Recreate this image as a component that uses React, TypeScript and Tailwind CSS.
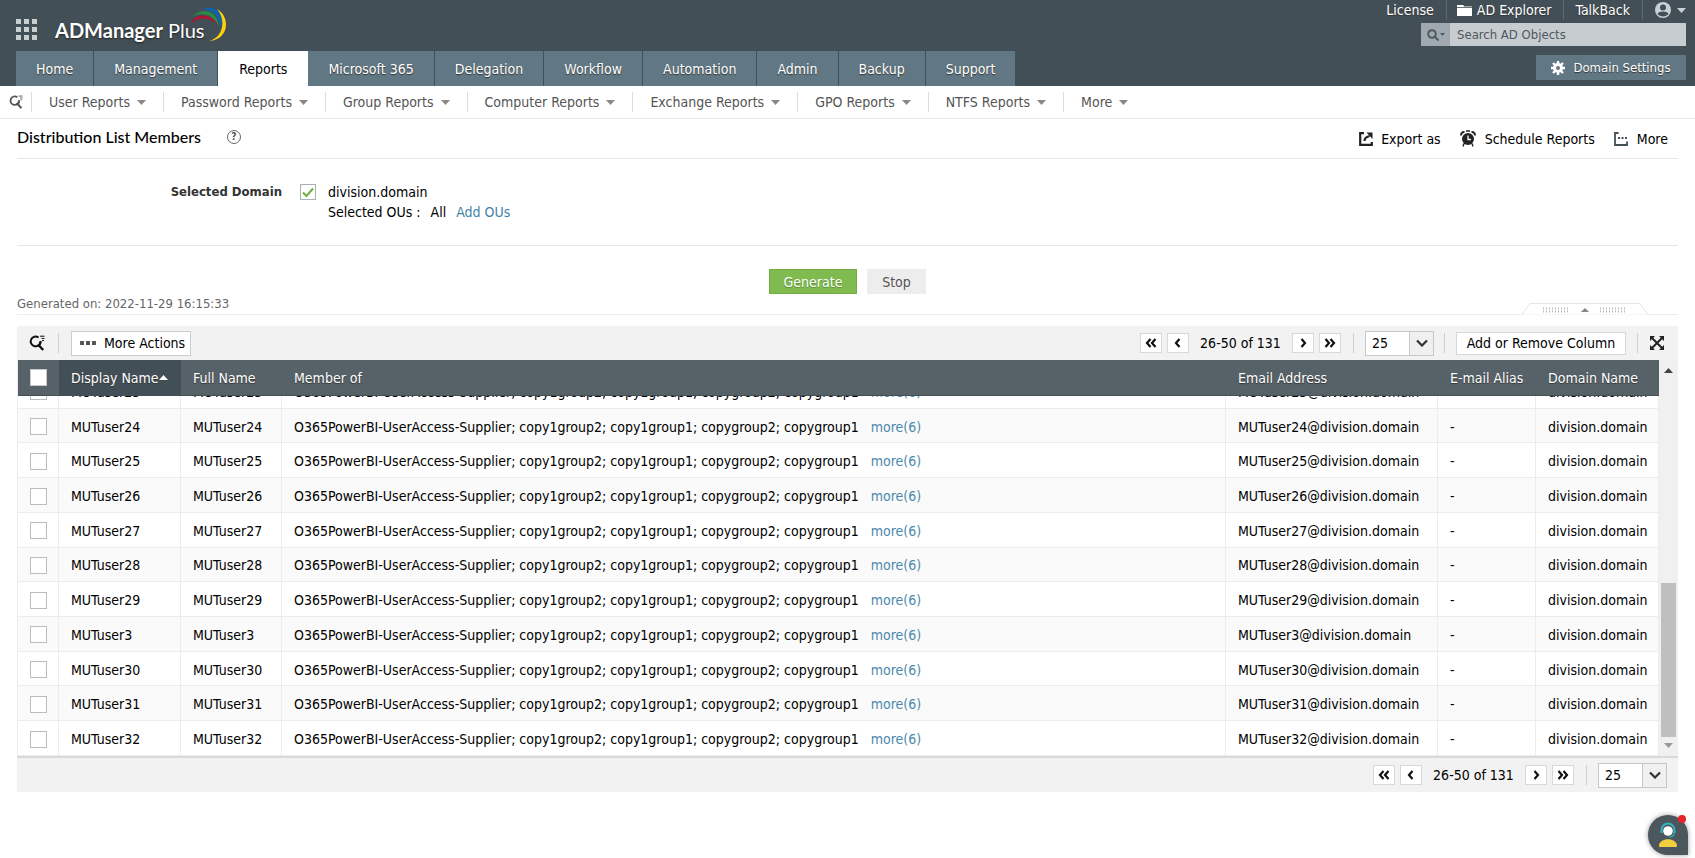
import { useLayoutEffect, useRef } from "react";

const tabs = [
  "Home",
  "Management",
  "Reports",
  "Microsoft 365",
  "Delegation",
  "Workflow",
  "Automation",
  "Admin",
  "Backup",
  "Support",
];

const reportMenus = [
  "User Reports",
  "Password Reports",
  "Group Reports",
  "Computer Reports",
  "Exchange Reports",
  "GPO Reports",
  "NTFS Reports",
  "More",
];

const users = [
  "MUTuser23",
  "MUTuser24",
  "MUTuser25",
  "MUTuser26",
  "MUTuser27",
  "MUTuser28",
  "MUTuser29",
  "MUTuser3",
  "MUTuser30",
  "MUTuser31",
  "MUTuser32",
];

const groups = "O365PowerBI-UserAccess-Supplier; copy1group2; copy1group1; copygroup2; copygroup1";

function Caret({ className }: { className: string }) {
  return (
    <svg viewBox="0 0 9 5" className={className} fill="currentColor" aria-hidden="true">
      <path d="M0 0h9L4.500 5z" />
    </svg>
  );
}

function SearchListIcon({ className }: { className: string }) {
  return (
    <svg viewBox="0 0 16 16" className={className} fill="none" stroke="currentColor" aria-hidden="true">
      <path d="M9.500 2.500A4.900 4.900 0 1 0 11.500 6.500" strokeWidth="2" />
      <path d="M11.500 6A4.900 4.900 0 0 1 8.500 11" strokeWidth="2" />
      <path d="M9.300 9.800l4.900 5.200" strokeWidth="2.400" />
      <path d="M11 1.200H15.500M12.500 3.400H15.500M13 5.600H15" strokeWidth="1" />
    </svg>
  );
}

function AppGridIcon() {
  return (
    <svg viewBox="0 0 21 21" className="size-[21px]" fill="#c9ced1" aria-hidden="true">
      {[0, 8, 16].map((y) => [0, 8, 16].map((x) => <rect key={`${x}-${y}`} x={x} y={y} width="5" height="5" />))}
    </svg>
  );
}

function LogoArcs() {
  return (
    <svg viewBox="0 0 38 36" className="absolute -top-3 -right-6 h-9 w-[38px]" aria-hidden="true">
      <path d="M1 18C4 8 19 5 28 19C20 11 8 10 1 18z" fill="#b3122f" />
      <path d="M3 10C12 1 27 4 29 20C22 8 14 6 3 10z" fill="#2c8a45" />
      <path d="M12 4C24-2 35 6 31 22C28 9 23 3 12 4z" fill="#0d63ae" />
      <path d="M27 3C41 11 39 34 19 35C34 31 36 13 27 3z" fill="#fdd00b" />
    </svg>
  );
}

function ChevronIcon({ double, flip }: { double?: boolean; flip?: boolean }) {
  return (
    <svg
      viewBox="0 0 12 10"
      className={flip ? "h-[10px] w-3 rotate-180" : "h-[10px] w-3"}
      fill="none"
      stroke="#111"
      strokeWidth="2.200"
      aria-hidden="true"
    >
      {double ? <path d="M5.500 1L2 5l3.500 4M10.500 1L7 5l3.500 4" /> : <path d="M7.500 1L4 5l3.500 4" />}
    </svg>
  );
}

function PagerButton({ label, double, flip }: { label: string; double?: boolean; flip?: boolean }) {
  return (
    <button
      type="button"
      aria-label={label}
      className="flex h-5 w-[22px] items-center justify-center border border-[#d4dadb] bg-white"
    >
      <ChevronIcon double={double} flip={flip} />
    </button>
  );
}

function Divider() {
  return <span className="h-5 w-px bg-[#cfcfcf]" />;
}

function Pager() {
  return (
    <div className="flex items-center">
      <div className="flex gap-[5px]">
        <PagerButton label="First page" double />
        <PagerButton label="Previous page" />
      </div>
      <span className="w-[103px] text-center">26-50 of 131</span>
      <div className="mr-3 flex gap-[5px]">
        <PagerButton label="Next page" flip />
        <PagerButton label="Last page" double flip />
      </div>
      <Divider />
      <div className="relative ml-[11px]">
        <select
          aria-label="Rows per page"
          defaultValue="25"
          className="block h-[25px] w-[69px] appearance-none border border-[#c4c8ca] bg-white pl-[6px] text-[14px]"
        >
          <option>25</option>
          <option>50</option>
          <option>100</option>
        </select>
        <span className="pointer-events-none absolute inset-y-px right-px flex w-6 items-center justify-center border-l border-[#c4c8ca] bg-[#f0f0f0]">
          <svg viewBox="0 0 12 8" className="h-2 w-3" fill="none" stroke="#333" strokeWidth="2.200" aria-hidden="true">
            <path d="M1 1.500l5 5 5-5" />
          </svg>
        </span>
      </div>
    </div>
  );
}

function TopHeader() {
  return (
    <header className="flex justify-between bg-[#434f57] text-white">
      <div className="flex flex-col pl-4">
        <div className="flex h-[51px] items-center">
          <button type="button" aria-label="Applications" className="mt-2">
            <AppGridIcon />
          </button>
          <a
            href="#home"
            className="relative mt-2 ml-[18px] font-['Lato'] text-[20px] leading-6 [text-shadow:0_1px_2px_#222]"
          >
            <span className="font-bold">ADManager</span> Plus
            <LogoArcs />
          </a>
        </div>
        <nav className="flex h-[35px]">
          {tabs.map((tab) => (
            <a
              key={tab}
              href={`#${tab}`}
              className={
                tab === "Reports"
                  ? "flex items-center bg-white px-[21px] text-black"
                  : "flex items-center border-r border-[#434f57] bg-[#617783] px-5 [text-shadow:0_1px_1px_#333]"
              }
            >
              {tab}
            </a>
          ))}
        </nav>
      </div>

      <div className="flex flex-col items-end pr-[9px]">
        <div className="flex h-[23px] items-center pb-[3px] [text-shadow:0_1px_1px_#333]">
          <a href="#license" className="border-r border-[#5d686f] pr-3">
            License
          </a>
          <a href="#explorer" className="flex items-center gap-[5px] border-r border-[#5d686f] pr-[11px] pl-[10px]">
            <svg viewBox="0 0 15 11" className="h-[11px] w-[15px]" fill="#fff" aria-hidden="true">
              <path d="M0 0h6l1.500 1.500H15V11H0z" />
              <path d="M0 2.500h15" stroke="#434f57" strokeWidth=".8" />
            </svg>
            AD Explorer
          </a>
          <a href="#talkback" className="border-r border-[#5d686f] px-3">
            TalkBack
          </a>
          <button type="button" aria-label="Account" className="flex items-center gap-[6px] pl-3 text-[#c8d0d4]">
            <svg viewBox="0 0 16 16" className="size-4" aria-hidden="true">
              <circle cx="8" cy="8" r="8" fill="currentColor" />
              <circle cx="8" cy="5.500" r="3" fill="#434f57" />
              <path d="M2.500 12C4 8.800 12 8.800 13.500 12 11 15.200 5 15.200 2.500 12z" fill="#434f57" />
            </svg>
            <Caret className="h-[5px] w-[9px]" />
          </button>
        </div>
        <div className="flex h-[23px] w-[265px] text-[13px]">
          <button
            type="button"
            aria-label="Search options"
            className="flex w-[29px] items-center justify-center gap-px bg-[#9fa9af] text-[#4d585f]"
          >
            <svg viewBox="0 0 12 12" className="size-3" fill="none" stroke="currentColor" strokeWidth="2" aria-hidden="true">
              <circle cx="5" cy="5" r="3.800" />
              <path d="M7.800 7.800l3.700 3.700" />
            </svg>
            <Caret className="h-[3px] w-[5px]" />
          </button>
          <input
            type="text"
            aria-label="Search AD Objects"
            placeholder="Search AD Objects"
            className="min-w-0 flex-1 bg-[#c7ccd0] px-[7px] placeholder:text-[#50585e]"
          />
        </div>
        <button
          type="button"
          className="mt-[9px] flex h-[25px] w-[150px] items-center justify-center gap-2 bg-[#617783] text-[13px] [text-shadow:0_1px_1px_#333]"
        >
          <svg viewBox="0 0 14 14" className="size-[14px]" fill="none" stroke="#fff" aria-hidden="true">
            <circle cx="7" cy="7" r="3.500" strokeWidth="3" />
            <path d="M7 0v3M7 11v3M0 7h3M11 7h3M2 2l2 2M10 10l2 2M12 2l-2 2M4 10l-2 2" strokeWidth="2.400" />
          </svg>
          Domain Settings
        </button>
      </div>
    </header>
  );
}

function ReportNav() {
  return (
    <nav className="flex h-[33px] items-center border-b border-[#e4e7e8] pl-[9px] text-[#555]">
      <button type="button" aria-label="Search reports" className="mr-2">
        <SearchListIcon className="size-[14px]" />
      </button>
      {reportMenus.map((menu) => (
        <button
          key={menu}
          type="button"
          className="flex h-5 items-center gap-[7px] border-l border-[#dcdcdc] px-[17px]"
        >
          {menu}
          <Caret className="h-[5px] w-[9px] text-[#888]" />
        </button>
      ))}
    </nav>
  );
}

function TitleBar() {
  return (
    <div className="flex h-10 items-center justify-between border-b border-[#e6e6e6]">
      <div className="flex items-center gap-[26px] pb-1">
        <h1 className="font-['Lato'] text-[16px] leading-6 font-medium">Distribution List Members</h1>
        <button
          type="button"
          aria-label="Help"
          className="flex size-[14px] items-center justify-center rounded-full border border-[#666] text-[10px] font-bold text-[#555]"
        >
          ?
        </button>
      </div>
      <div className="flex items-center gap-[19px] pr-[10px]">
        <button type="button" className="flex items-center gap-2">
          <svg viewBox="0 0 14 14" className="size-[14px]" fill="none" stroke="#222" aria-hidden="true">
            <path d="M5 1.200H1.200v11.600h11.600V10" strokeWidth="2.200" />
            <path d="M5.500 9c0-2.500 1-4 5-5" strokeWidth="2.200" />
            <path d="M7.500 .5h6V7z" fill="#222" stroke="none" />
          </svg>
          Export as
        </button>
        <button type="button" className="flex items-center gap-[9px]">
          <svg viewBox="0 0 16 17" className="h-[17px] w-4" aria-hidden="true">
            <circle cx="8" cy="9" r="6" fill="#222" />
            <path d="M1 5.500C1 3 2.500 1.800 4.500 2M15 5.500C15 3 13.500 1.800 11.500 2" fill="none" stroke="#222" strokeWidth="2" />
            <path d="M4 13.500l-1 3M12 13.500l1 3M6 1h4" stroke="#222" strokeWidth="1.400" />
            <path d="M8 5.500v4h3" fill="none" stroke="#fff" strokeWidth="1.300" />
          </svg>
          Schedule Reports
        </button>
        <button type="button" className="flex items-center gap-[9px]">
          <svg viewBox="0 0 14 14" className="size-[14px]" fill="none" stroke="#434f57" aria-hidden="true">
            <path d="M4.500 1H1v12h12V9.500" strokeWidth="1.800" />
            <path d="M4 6h2M7.500 6h2M11 6h2" strokeWidth="1.800" />
          </svg>
          More
        </button>
      </div>
    </div>
  );
}

function DomainFilter() {
  return (
    <section className="flex h-[87px] border-b border-[#e6e6e6] pt-[23px]">
      <div className="w-[265px] text-right text-[13px] leading-5 font-bold text-[#333]">Selected Domain</div>
      <div className="ml-[18px] flex gap-3">
        <span className="relative mt-[2px] size-4">
          <input
            id="domain"
            type="checkbox"
            defaultChecked
            className="peer block size-4 appearance-none border border-[#aab0b3] bg-white"
          />
          <svg
            viewBox="0 0 16 16"
            className="pointer-events-none absolute inset-0 hidden size-4 peer-checked:block"
            fill="none"
            stroke="#6cb13c"
            strokeWidth="2"
            aria-hidden="true"
          >
            <path d="M3 8.500l3.500 3.500L13 4.500" />
          </svg>
        </span>
        <div className="leading-5">
          <label htmlFor="domain" className="block">
            division.domain
          </label>
          <div className="flex gap-[10px]">
            <span>Selected OUs :</span>
            <span>All</span>
            <a href="#ous" className="text-[#3f83a8]">
              Add OUs
            </a>
          </div>
        </div>
      </div>
    </section>
  );
}

function CollapseHandle() {
  return (
    <button type="button" aria-label="Collapse filters" className="absolute right-[30px] -bottom-px">
      <svg viewBox="0 0 126 12" className="h-3 w-[126px]" aria-hidden="true">
        <path d="M0 11.500L8 .5h110l8 11z" fill="#fff" />
        <path d="M0 11.500L8 .5h110l8 11" fill="none" stroke="#e3e5e6" />
        <path d="M63 5l4 4h-8z" fill="#7d888e" />
        <path
          d="M21 5.500h27M21 8.500h27M78 5.500h27M78 8.500h27"
          stroke="#b4babd"
          strokeWidth="2"
          strokeDasharray="1 2"
        />
      </svg>
    </button>
  );
}

function GenerateBar() {
  return (
    <section className="relative border-b border-[#ececec] pt-[23px]">
      <div className="flex justify-center gap-[10px]">
        <button
          type="button"
          className="h-[25px] w-[88px] border border-[#72ae43] bg-[#80bb50] text-white [text-shadow:0_1px_1px_#5a8a35]"
        >
          Generate
        </button>
        <button type="button" className="h-[25px] w-[59px] bg-[#ededed] text-[#555]">
          Stop
        </button>
      </div>
      <p className="h-5 text-[13px] leading-5 text-[#666]">Generated on: 2022-11-29 16:15:33</p>
      <CollapseHandle />
    </section>
  );
}

function Toolbar() {
  return (
    <div className="mt-[11px] flex h-[34px] items-center justify-between bg-[#f2f2f2] pr-[14px] pl-3">
      <div className="flex items-center">
        <button type="button" aria-label="Search in report" className="mr-[13px] text-[#111]">
          <SearchListIcon className="size-4" />
        </button>
        <Divider />
        <button
          type="button"
          className="ml-3 flex h-[25px] items-center gap-2 border border-[#c9cdcf] bg-white pr-[5px] pl-2"
        >
          <svg viewBox="0 0 16 4" className="h-1 w-4" fill="#555" aria-hidden="true">
            <path d="M0 0h4v4H0zM6 0h4v4H6zM12 0h4v4h-4z" />
          </svg>
          More Actions
        </button>
      </div>
      <div className="flex items-center">
        <Pager />
        <span className="ml-[10px] flex items-center gap-[11px]">
          <Divider />
          <button type="button" className="h-[23px] w-[170px] border border-[#d4dadb] bg-white">
            Add or Remove Column
          </button>
          <Divider />
        </span>
        <button type="button" aria-label="Full screen" className="ml-3">
          <svg viewBox="0 0 14 14" className="size-[14px]" fill="#222" stroke="#222" aria-hidden="true">
            <path d="M2 2l10 10M12 2L2 12" strokeWidth="2" />
            <path d="M0 0h5L0 5zM14 0v5L9 0zM0 14V9l5 5zM14 14H9l5-5z" stroke="none" />
          </svg>
        </button>
      </div>
    </div>
  );
}

function MembersTable() {
  const paneRef = useRef<HTMLDivElement>(null);

  useLayoutEffect(() => {
    if (paneRef.current) paneRef.current.scrollTop = paneRef.current.scrollHeight;
  }, []);

  return (
    <div className="flex h-[396px]">
      <div ref={paneRef} className="min-w-0 flex-1 overflow-y-auto [scrollbar-width:none]">
        <table className="h-[418px] w-full table-fixed border-separate border-spacing-0 border-l border-[#ececec] text-left whitespace-nowrap">
          <thead className="sticky top-0 z-10 text-white [text-shadow:0_1px_1px_#333]">
            <tr className="h-9 *:border-b *:border-[#444e55] *:font-normal">
              <th className="w-[41px] bg-[#566168] pl-3">
                <input
                  type="checkbox"
                  aria-label="Select all"
                  className="block size-[17px] appearance-none border border-[#c5c9cb] bg-white"
                />
              </th>
              <th className="w-[122px] bg-[#434f57] pl-3">
                <span className="flex items-center">
                  Display Name
                  <Caret className="h-[5px] w-[9px] rotate-180" />
                </span>
              </th>
              <th className="w-[101px] bg-[#566168] pl-3">Full Name</th>
              <th className="bg-[#566168] pl-3">Member of</th>
              <th className="w-[212px] bg-[#566168] pl-3">Email Address</th>
              <th className="w-[98px] bg-[#566168] pl-3">E-mail Alias</th>
              <th className="w-[123px] bg-[#566168] pl-3">Domain Name</th>
            </tr>
          </thead>
          <tbody>
            {users.map((user) => (
              <tr key={user} className="*:border-r *:border-b *:border-[#ececec] *:pt-[2px] *:pl-3 even:bg-[#fafafa]">
                <td>
                  <input
                    type="checkbox"
                    aria-label={`Select ${user}`}
                    className="block size-[17px] appearance-none border border-[#b9bdbf] bg-white"
                  />
                </td>
                <td>{user}</td>
                <td>{user}</td>
                <td>
                  {groups}
                  <a href={`#${user}`} className="ml-3 text-[#4a89ad]">
                    more(6)
                  </a>
                </td>
                <td>{user}@division.domain</td>
                <td>-</td>
                <td>division.domain</td>
              </tr>
            ))}
          </tbody>
        </table>
      </div>
      <div className="flex w-[19px] flex-col items-center bg-[#f0f0f0] py-2">
        <Caret className="h-[5px] w-[9px] rotate-180 text-[#444]" />
        <span className="mt-auto mb-[6px] h-[154px] w-[15px] bg-[#bfbfbf]" />
        <Caret className="h-[5px] w-[9px] text-[#999]" />
      </div>
    </div>
  );
}

function ChatButton() {
  return (
    <button type="button" aria-label="Support chat" className="fixed right-[7px] bottom-[3px]">
      <span className="flex size-10 items-center justify-center rounded-full rounded-br-lg bg-[#4c565d] shadow-[0_0_5px_#999]">
        <svg viewBox="0 0 20 26" className="h-[26px] w-5" aria-hidden="true">
          <path d="M3.500 11V8a6.500 6.500 0 0 1 13 0v3" fill="none" stroke="#2fb6c4" strokeWidth="2" />
          <circle cx="10" cy="9" r="4.800" fill="#fff" />
          <path d="M16 11c0 3-2 4-5 4" fill="none" stroke="#2fb6c4" strokeWidth="1.200" />
          <path d="M1 24c0-9 18-9 18 0q0 1-1 1H2q-1 0-1-1z" fill="#f3cf3f" />
        </svg>
      </span>
      <span className="absolute top-0 right-[2px] size-2 rounded-full bg-[#e6252b]" />
    </button>
  );
}

export default function App() {
  return (
    <div className="min-h-screen bg-white font-['DejaVu_Sans_Condensed','Noto_Sans',sans-serif] text-[14px] leading-5 text-black">
      <TopHeader />
      <ReportNav />
      <main className="px-[17px]">
        <TitleBar />
        <DomainFilter />
        <GenerateBar />
        <Toolbar />
        <MembersTable />
        <div className="flex h-9 items-center justify-end border-t-2 border-[#d9d9d9] bg-[#f2f2f2] pr-[11px]">
          <Pager />
        </div>
      </main>
      <ChatButton />
    </div>
  );
}
